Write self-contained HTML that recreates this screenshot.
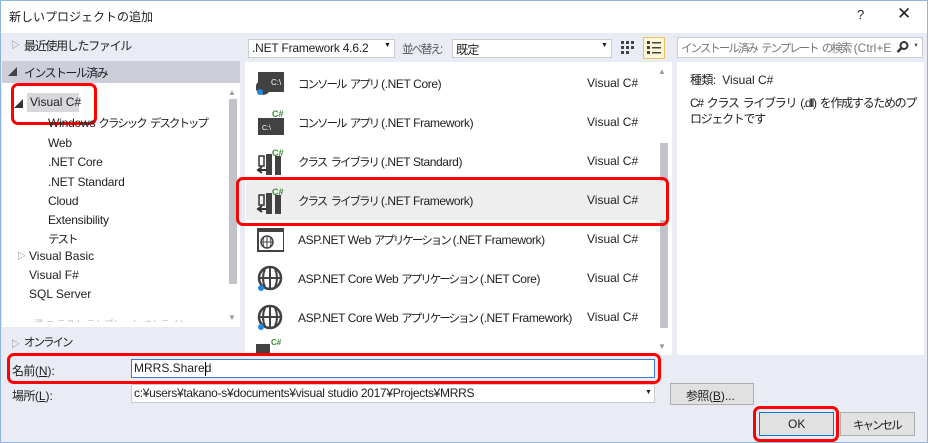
<!DOCTYPE html>
<html><head><meta charset="utf-8"><style>
*{margin:0;padding:0;box-sizing:border-box}
body{width:928px;height:443px;overflow:hidden;background:#e9ecf4;font-family:"Liberation Sans","Noto Sans CJK JP",sans-serif;font-size:12px;color:#1e1e1e;position:relative}
.a{position:absolute}
.t{white-space:nowrap}
.j{letter-spacing:-2px;font-size:11.5px;word-spacing:3px}
.k{letter-spacing:-0.6px}
.red{position:absolute;border:3px solid #f00;border-radius:7px}
.row{position:absolute;left:246px;width:408px;height:39px}
.row .n{position:absolute;left:52px;top:12px;white-space:nowrap;letter-spacing:-0.4px}
.row .n .j{letter-spacing:-2px}
.row .v{position:absolute;left:341px;top:12px}
.row svg{position:absolute;left:10px;top:6px}
</style></head><body>
<div class="a" style="left:0;top:0;width:928px;height:443px;border:1px solid #8fb3dc"></div>
<div class="a" style="left:1px;top:1px;width:926px;height:32px;background:#fff"></div>
<div class="a t" style="left:9px;top:8px">新しいプロジェクトの追加</div>
<div class="a t" style="left:857px;top:7px;font-size:13px">?</div>
<div class="a t" style="left:897px;top:4px;font-size:17px;color:#222">✕</div>

<!-- left -->
<div class="a t" style="left:11px;top:38px;color:#777;font-size:9px">▷</div>
<div class="a t" style="left:24px;top:37px;letter-spacing:-1.3px">最近使用したファイル</div>
<div class="a" style="left:2px;top:61px;width:238px;height:22px;background:#ccced9"></div>
<div class="a t" style="left:8px;top:65px;color:#444;font-size:9px">◢</div>
<div class="a t" style="left:24px;top:64px;letter-spacing:-1.6px">インストール済み</div>
<div class="a" style="left:2px;top:83px;width:238px;height:244px;background:#fff"></div>
<div class="a" style="left:227px;top:86px;width:12px;height:238px;background:#fff"></div>
<div class="a t" style="left:228px;top:88px;color:#999;font-size:8px">▲</div>
<div class="a" style="left:229px;top:99px;width:8px;height:185px;background:#c2c3c9"></div>
<div class="a t" style="left:228px;top:313px;color:#999;font-size:8px">▼</div>
<div class="a" style="left:27px;top:93px;width:52px;height:19px;background:#d8d8dc"></div>
<div class="a t" style="left:14px;top:97px;color:#333;font-size:9px">◢</div>
<div class="a t" style="left:30px;top:95px">Visual C#</div>
<div class="red" style="left:11px;top:83px;width:86px;height:42px"></div>
<div class="a t" style="left:48px;top:114px;line-height:19.2px;letter-spacing:-0.2px">Windows <span class="j">クラシック デスクトップ</span><br>Web<br>.NET Core<br>.NET Standard<br>Cloud<br>Extensibility<br><span class="j">テスト</span></div>
<div class="a t" style="left:17px;top:249px;color:#777;font-size:9px">▷</div>
<div class="a t" style="left:29px;top:247px;line-height:19.2px">Visual Basic<br>Visual F#<br>SQL Server</div>
<div class="a t" style="left:34px;top:317px;color:#bbb;font-size:9px;overflow:hidden;height:5px">課 ニ テスト テンプレート オンライン</div>
<div class="a t" style="left:11px;top:337px;color:#777;font-size:9px">▷</div>
<div class="a t j" style="left:24px;top:334px">オンライン</div>

<!-- toolbar -->
<div class="a" style="left:248px;top:39px;width:147px;height:19px;background:#fff;border:1px solid #ccc"></div>
<div class="a t" style="left:252px;top:41px;letter-spacing:-0.2px">.NET Framework 4.6.2</div>
<div class="a t" style="left:384px;top:42px;font-size:7px">▼</div>
<div class="a t j" style="left:402px;top:41px;color:#555">並べ替え:</div>
<div class="a" style="left:452px;top:39px;width:160px;height:19px;background:#fff;border:1px solid #ccc"></div>
<div class="a t k" style="left:456px;top:41px">既定</div>
<div class="a t" style="left:601px;top:42px;font-size:7px">▼</div>
<svg class="a" style="left:620px;top:40px" width="16" height="16"><g fill="#444"><rect x="1" y="1" width="3" height="3"/><rect x="6" y="1" width="3" height="3"/><rect x="11" y="1" width="3" height="3"/><rect x="1" y="6" width="3" height="3"/><rect x="6" y="6" width="3" height="3"/><rect x="11" y="6" width="3" height="3"/><rect x="1" y="11" width="3" height="3"/><rect x="6" y="11" width="3" height="3"/></g></svg>
<div class="a" style="left:643px;top:37px;width:22px;height:22px;background:#fff8d8;border:1px solid #e5c365"></div>
<svg class="a" style="left:646px;top:40px" width="16" height="16"><g fill="#444"><rect x="1" y="1" width="3" height="3"/><rect x="6" y="2" width="9" height="1.5"/><rect x="1" y="6" width="3" height="3"/><rect x="6" y="7" width="9" height="1.5"/><rect x="1" y="11" width="3" height="3"/><rect x="6" y="12" width="9" height="1.5"/></g></svg>
<div class="a" style="left:677px;top:37px;width:246px;height:21px;background:#fff;border:1px solid #ccc"></div>
<div class="a t" style="left:681px;top:40px;color:#777;width:212px;overflow:hidden"><span class="j">インストール済み テンプレート の検索</span> (Ctrl+E</div>
<svg class="a" style="left:896px;top:40px" width="14" height="14"><circle cx="8" cy="5.5" r="3.5" fill="none" stroke="#333" stroke-width="2"/><path d="M5.5 8L1.5 12" stroke="#333" stroke-width="2.5"/></svg>
<div class="a t" style="left:913px;top:43px;font-size:6px;color:#555">▼</div>

<!-- middle list -->
<div class="a" style="left:245px;top:62px;width:427px;height:293px;background:#fff"></div>
<div class="a t" style="left:658px;top:67px;color:#999;font-size:8px">▲</div>
<div class="a" style="left:660px;top:143px;width:8px;height:185px;background:#c2c3c9"></div>
<div class="a t" style="left:658px;top:342px;color:#999;font-size:8px">▼</div>
<div class="a" style="left:246px;top:181px;width:421px;height:39px;background:#eeeeee"></div>

<div class="row" style="top:64px"><svg width="28" height="28"><rect x="2" y="2" width="26" height="20" fill="#424242"/><text x="15" y="15" fill="#fff" font-size="8" font-family="Liberation Sans">C:\</text><path d="M10 12a6 6 0 1 0 2 9" stroke="#424242" stroke-width="3" fill="none"/><circle cx="4" cy="22" r="3" fill="#1e88e5"/></svg><span class="n"><span class="j">コンソール アプリ</span> (.NET Core)</span><span class="v">Visual C#</span></div>
<div class="row" style="top:103px"><svg width="28" height="28"><rect x="2" y="9" width="26" height="17" fill="#424242"/><text x="6" y="21" fill="#fff" font-size="7" font-family="Liberation Sans">C:\</text><text x="16" y="8" fill="#388a34" font-size="9" font-weight="bold" font-family="Liberation Sans">C#</text></svg><span class="n"><span class="j">コンソール アプリ</span> (.NET Framework)</span><span class="v">Visual C#</span></div>
<div class="row" style="top:142px"><svg width="28" height="28"><rect x="3" y="8" width="5" height="10" fill="none" stroke="#333" stroke-width="1.5"/><rect x="10" y="6" width="6" height="21" fill="#424242"/><rect x="19" y="8" width="6" height="19" fill="#424242"/><path d="M2 22h8M6 19l-4 3 4 3" stroke="#333" stroke-width="2" fill="none"/><text x="16" y="8" fill="#388a34" font-size="9" font-weight="bold" font-family="Liberation Sans">C#</text></svg><span class="n"><span class="j">クラス ライブラリ</span> (.NET Standard)</span><span class="v">Visual C#</span></div>
<div class="row" style="top:181px"><svg width="28" height="28"><rect x="3" y="8" width="5" height="10" fill="none" stroke="#333" stroke-width="1.5"/><rect x="10" y="6" width="6" height="21" fill="#424242"/><rect x="19" y="8" width="6" height="19" fill="#424242"/><path d="M2 22h8M6 19l-4 3 4 3" stroke="#333" stroke-width="2" fill="none"/><text x="16" y="8" fill="#388a34" font-size="9" font-weight="bold" font-family="Liberation Sans">C#</text></svg><span class="n"><span class="j">クラス ライブラリ</span> (.NET Framework)</span><span class="v">Visual C#</span></div>
<div class="row" style="top:220px"><svg width="28" height="28"><rect x="2" y="3" width="26" height="22" fill="none" stroke="#424242" stroke-width="2"/><rect x="2" y="3" width="26" height="3" fill="#424242"/><circle cx="11" cy="16" r="6" fill="none" stroke="#424242" stroke-width="1.5"/><path d="M5 16h12M11 10v12M8 11q-2 5 0 10M14 11q2 5 0 10" stroke="#424242" fill="none"/></svg><span class="n">ASP.NET Web <span class="j">アプリケーション</span> (.NET Framework)</span><span class="v">Visual C#</span></div>
<div class="row" style="top:259px"><svg width="28" height="30"><circle cx="14" cy="13" r="11" fill="none" stroke="#424242" stroke-width="2.5"/><path d="M3 13h22M14 2v22M9 4q-4 9 0 18M19 4q4 9 0 18" stroke="#424242" stroke-width="2" fill="none"/><circle cx="5" cy="23" r="3" fill="#1e88e5"/></svg><span class="n">ASP.NET Core Web <span class="j">アプリケーション</span> (.NET Core)</span><span class="v">Visual C#</span></div>
<div class="row" style="top:298px"><svg width="28" height="30"><circle cx="14" cy="13" r="11" fill="none" stroke="#424242" stroke-width="2.5"/><path d="M3 13h22M14 2v22M9 4q-4 9 0 18M19 4q4 9 0 18" stroke="#424242" stroke-width="2" fill="none"/><circle cx="5" cy="23" r="3" fill="#1e88e5"/></svg><span class="n">ASP.NET Core Web <span class="j">アプリケーション</span> (.NET Framework)</span><span class="v">Visual C#</span></div>
<div class="a" style="left:256px;top:344px;width:14px;height:11px;background:#424242"></div>
<div class="a t" style="left:271px;top:338px;color:#388a34;font-size:8px;font-weight:bold">C#</div>
<div class="red" style="left:236px;top:177px;width:433px;height:49px"></div>

<!-- right -->
<div class="a" style="left:677px;top:62px;width:247px;height:293px;background:#fff"></div>
<div class="a t" style="left:690px;top:71px"><span class="k">種類:</span>&nbsp; Visual C#</div>
<div class="a" style="left:690px;top:95px;width:230px;line-height:16px;letter-spacing:-1.3px;word-spacing:2px">C# クラス ライブラリ (.dll) を作成するためのプロジェクトです</div>

<!-- bottom -->
<div class="a t" style="left:12px;top:362px"><span class="k">名前</span>(<u>N</u>):</div>
<div class="a" style="left:131px;top:359px;width:524px;height:19px;background:#fff;border:1px solid #3d7bd4"></div>
<div class="a t" style="left:134px;top:361px">MRRS.Shared</div>
<div class="a" style="left:205px;top:362px;width:1px;height:14px;background:#000"></div>
<div class="red" style="left:7px;top:353px;width:654px;height:31px"></div>
<div class="a t" style="left:12px;top:387px"><span class="k">場所</span>(<u>L</u>):</div>
<div class="a" style="left:131px;top:384px;width:524px;height:19px;background:#fff;border:1px solid #ccc"></div>
<div class="a t" style="left:134px;top:386px;letter-spacing:-0.3px">c:¥users¥takano-s¥documents¥visual studio 2017¥Projects¥MRRS</div>
<div class="a t" style="left:645px;top:389px;font-size:7px">▼</div>
<div class="a" style="left:670px;top:383px;width:84px;height:22px;background:#e1e1e1;border:1px solid #adadad"></div>
<div class="a t" style="left:686px;top:387px"><span class="k">参照</span>(<u>B</u>)...</div>
<div class="a" style="left:759px;top:412px;width:75px;height:24px;background:#e1e1e1;border:1px solid #0078d7"></div>
<div class="a t" style="left:788px;top:417px">OK</div>
<div class="red" style="left:753px;top:406px;width:86px;height:36px"></div>
<div class="a" style="left:840px;top:412px;width:75px;height:24px;background:#e1e1e1;border:1px solid #adadad"></div>
<div class="a t j" style="left:853px;top:417px">キャンセル</div>
</body></html>
